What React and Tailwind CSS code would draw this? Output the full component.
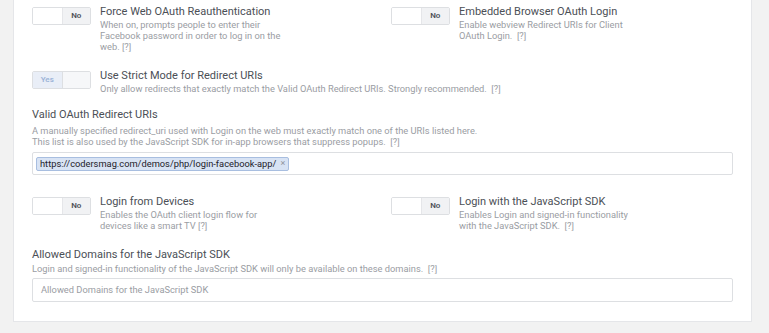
import React from "react";

const Toggle = ({ on }) => (
    <div className="flex w-[59px] h-[18px] shrink-0 border border-[#dddfe2] rounded-[2px] overflow-hidden text-[8px] font-semibold">
        {on ? (
            <>
                <div className="w-1/2 bg-[#e9eef7] text-[#9cb4d8] flex items-center justify-center">Yes</div>
                <div className="w-1/2 bg-[#f6f7f9] border-l border-[#dddfe2]"></div>
            </>
        ) : (
            <>
                <div className="w-1/2 bg-white"></div>
                <div className="w-1/2 bg-[#f1f2f4] text-[#4b4f56] flex items-center justify-center border-l border-[#e5e6e9]">No</div>
            </>
        )}
    </div>
);

const Setting = ({ on, title, children, width = "w-[190px]" }) => (
    <div className="flex gap-[9px]">
        <Toggle on={on} />
        <div className="-mt-[2px]">
            <div className="text-[11px] leading-[14px] text-[#4b4f56]">{title}</div>
            <div className={`text-[9.3px] leading-[11px] text-[#9a9da3] ${width}`}>{children}</div>
        </div>
    </div>
);

const App = () => {
    return (
        <div className="bg-[#f2f2f2] h-[333px] pl-[13px] pr-[17px]" style={{ fontFamily: "Roboto, 'Liberation Sans', sans-serif" }}>
            <div className="bg-white border-x border-b border-[#e5e6e9] h-[322px] pt-[7px] pl-[18px] pr-[18px]">
                <div className="grid grid-cols-[359px_1fr]">
                    <Setting title="Force Web OAuth Reauthentication">
                        When on, prompts people to enter their Facebook password in order to log in on the web. [?]
                    </Setting>
                    <Setting title="Embedded Browser OAuth Login" width="w-[175px]">
                        Enable webview Redirect URIs for Client OAuth Login.&nbsp; [?]
                    </Setting>
                </div>

                <div className="mt-[19px]">
                    <Setting on title="Use Strict Mode for Redirect URIs" width="w-auto">
                        Only allow redirects that exactly match the Valid OAuth Redirect URIs. Strongly recommended.&nbsp; [?]
                    </Setting>
                </div>

                <div className="mt-[13px]">
                    <div className="text-[11px] leading-[15px] text-[#4b4f56]">Valid OAuth Redirect URIs</div>
                    <div className="mt-[3px] text-[9.3px] leading-[11px] text-[#9a9da3]">
                        A manually specified redirect_uri used with Login on the web must exactly match one of the URIs listed here.
                        <br />
                        This list is also used by the JavaScript SDK for in-app browsers that suppress popups.&nbsp; [?]
                    </div>
                    <div className="mt-[5px] h-[23px] border border-[#dddfe2] rounded-[2px] flex items-center px-[3px]">
                        <span className="flex items-center gap-[4px] h-[14px] px-[3px] bg-[#d8e3f4] border border-[#a8bee0] rounded-[2px] text-[9.3px] text-[#1d2129]">
                            https://codersmag.com/demos/php/login-facebook-app/
                            <span className="text-[#90949c] text-[9px]">×</span>
                        </span>
                    </div>
                </div>

                <div className="grid grid-cols-[359px_1fr] mt-[22px]">
                    <Setting title="Login from Devices" width="w-[170px]">
                        Enables the OAuth client login flow for devices like a smart TV [?]
                    </Setting>
                    <Setting title="Login with the JavaScript SDK" width="w-[170px]">
                        Enables Login and signed-in functionality with the JavaScript SDK.&nbsp; [?]
                    </Setting>
                </div>

                <div className="mt-[17px]">
                    <div className="text-[11px] leading-[14px] text-[#4b4f56]">Allowed Domains for the JavaScript SDK</div>
                    <div className="mt-[1px] text-[9.3px] leading-[11px] text-[#9a9da3]">
                        Login and signed-in functionality of the JavaScript SDK will only be available on these domains.&nbsp; [?]
                    </div>
                    <div className="mt-[4px] h-[24px] border border-[#dddfe2] rounded-[2px] flex items-center px-[8px] text-[9.3px] text-[#9a9da3]">
                        Allowed Domains for the JavaScript SDK
                    </div>
                </div>
            </div>
        </div>
    );
};

export default App;
